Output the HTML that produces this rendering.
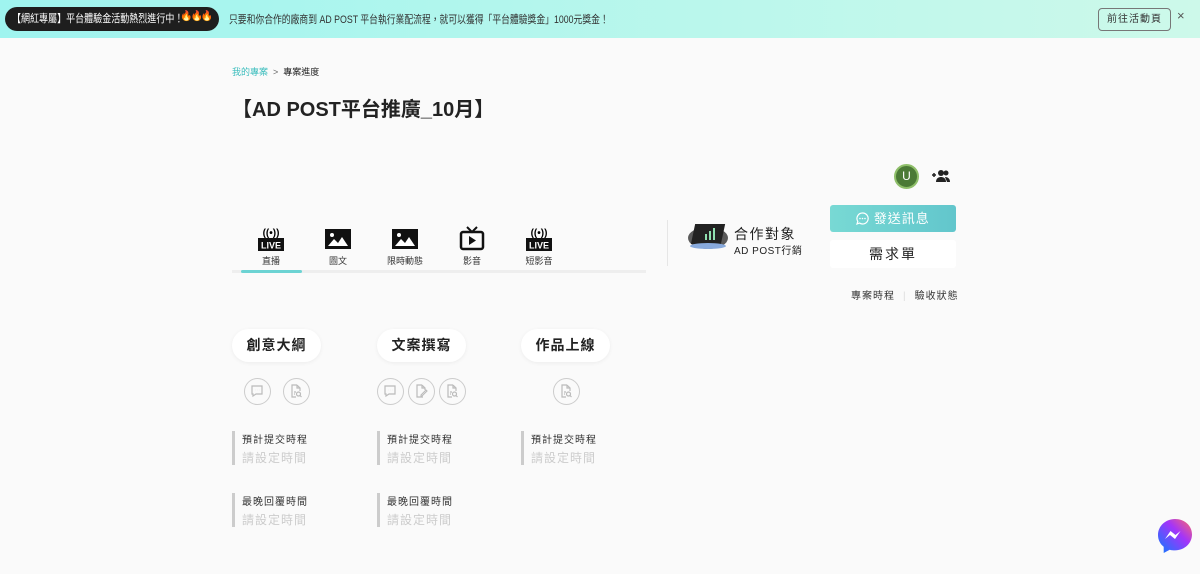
<!DOCTYPE html>
<html><head><meta charset="utf-8"><style>
*{margin:0;padding:0;box-sizing:border-box}
body{width:1200px;height:574px;background:#fafafa;font-family:"Liberation Sans","Noto Sans CJK TC",sans-serif;position:relative;overflow:hidden;color:#222}
.ab{position:absolute}
.banner{left:0;top:0;width:1200px;height:38px;background:linear-gradient(90deg,#9ff4ef,#cdf9ea)}
.pill1{left:5px;top:7px;width:214px;height:24px;background:#1e1e1e;border-radius:12px;color:#fff;font-size:11px;line-height:24px;padding-left:7px;white-space:nowrap}
.pill1 span.t{display:inline-block;transform:scaleX(.82);transform-origin:left}
.btxt{left:229px;top:11px;font-size:11px;color:#333;white-space:nowrap;transform:scaleX(.8);transform-origin:left}
.gob{left:1098px;top:8px;width:73px;height:23px;border:1px solid #777;border-radius:4px;font-size:10px;text-align:center;line-height:21px;color:#333;letter-spacing:1px}
.tab{position:absolute;top:225px;width:60px;text-align:center;font-size:9px;color:#333}
.tab svg{display:block;margin:0 auto 1px}
.pl{position:absolute;top:329px;width:89px;height:33px;background:#fff;border-radius:17px;box-shadow:0 1px 4px rgba(0,0,0,.06);font-size:14px;font-weight:bold;text-align:center;line-height:33px;letter-spacing:1px}
.ci{position:absolute;top:378px;width:27px;height:27px;border:1.5px solid #ccc;border-radius:50%}
.ci svg{position:absolute;left:5px;top:5px}
.tl{position:absolute;border-left:3px solid #ccc;height:34px;padding-left:7px}
.tl b{display:block;font-weight:normal;font-size:10px;color:#333;letter-spacing:1px;margin-top:0}
.tl span{display:block;font-size:12px;color:#ccc;letter-spacing:1px;margin-top:3px}
</style></head><body>
<div class="ab banner"></div>
<div class="ab pill1"><span class="t">【網紅專屬】平台體驗金活動熱烈進行中！</span></div>
<div class="ab" style="left:180px;top:11px;font-size:10px;color:#f60;letter-spacing:-2px">🔥🔥🔥</div>
<div class="ab btxt">只要和你合作的廠商到 AD POST 平台執行業配流程，就可以獲得「平台體驗獎金」1000元獎金！</div>
<div class="ab gob">前往活動頁</div>
<div class="ab" style="left:1177px;top:8px;font-size:13px;color:#555">×</div>

<div class="ab" style="left:232px;top:65px;font-size:9px"><span style="color:#3bbdbd">我的專案</span> <span style="color:#666">&nbsp;&gt;&nbsp;</span> 專案進度</div>
<div class="ab" style="left:232px;top:93px;font-size:20px;font-weight:bold">【AD POST平台推廣_10月】</div>

<div class="tab" style="left:241px"><svg width="28" height="28" viewBox="0 0 28 28"><text x="14" y="11" font-size="10" text-anchor="middle" font-weight="bold" font-family="Liberation Sans">((•))</text><rect x="1" y="13" width="26" height="13" fill="#111"/><text x="14" y="23.5" font-size="9" fill="#fff" text-anchor="middle" font-weight="bold" font-family="Liberation Sans">LIVE</text></svg>直播</div>
<div class="tab" style="left:308px"><svg width="28" height="28" viewBox="0 0 28 28"><rect x="1" y="4" width="26" height="20" fill="#111"/><circle cx="8" cy="10" r="2" fill="#fff"/><path d="M4 21l6-7 4 4 4-6 6 9z" fill="#fff"/></svg>圖文</div>
<div class="tab" style="left:375px"><svg width="28" height="28" viewBox="0 0 28 28"><rect x="1" y="4" width="26" height="20" fill="#111"/><circle cx="8" cy="10" r="2" fill="#fff"/><path d="M4 21l6-7 4 4 4-6 6 9z" fill="#fff"/></svg>限時動態</div>
<div class="tab" style="left:442px"><svg width="28" height="28" viewBox="0 0 28 28"><path d="M9 2l5 5 5-5" stroke="#111" stroke-width="2" fill="none"/><rect x="3" y="7" width="22" height="17" rx="2" stroke="#111" stroke-width="2.5" fill="none"/><path d="M11 11l7 4.5-7 4.5z" fill="#111"/></svg>影音</div>
<div class="tab" style="left:509px"><svg width="28" height="28" viewBox="0 0 28 28"><text x="14" y="11" font-size="10" text-anchor="middle" font-weight="bold" font-family="Liberation Sans">((•))</text><rect x="1" y="13" width="26" height="13" fill="#111"/><text x="14" y="23.5" font-size="9" fill="#fff" text-anchor="middle" font-weight="bold" font-family="Liberation Sans">LIVE</text></svg>短影音</div>
<div class="ab" style="left:232px;top:270px;width:414px;height:3px;background:#eee"></div>
<div class="ab" style="left:241px;top:270px;width:61px;height:3px;background:#6cd3d3;border-radius:2px"></div>

<div class="ab" style="left:667px;top:220px;width:1px;height:46px;background:#e6e6e6"></div>
<svg class="ab" style="left:688px;top:220px" width="42" height="32" viewBox="0 0 42 32"><ellipse cx="20" cy="18" rx="20" ry="11" fill="#5a5a5a"/><rect x="8" y="4" width="30" height="20" fill="#222" transform="skewX(-12)"/><path d="M18 20v-6M22 20v-9M26 20v-12" stroke="#8fe0b0" stroke-width="2"/><ellipse cx="20" cy="26" rx="18" ry="3" fill="#8ad"/></svg>
<div class="ab" style="left:734px;top:224px;font-size:14px;letter-spacing:1.5px">合作對象</div>
<div class="ab" style="left:734px;top:242px;font-size:10px;letter-spacing:.5px">AD POST行銷</div>

<div class="ab" style="left:894px;top:164px;width:25px;height:25px;border-radius:50%;background:#4b7a36;border:2px solid #8fbf6a;color:#fff;font-size:12px;text-align:center;line-height:21px">U</div>
<svg class="ab" style="left:932px;top:169px" width="18" height="13" viewBox="0 0 18 13"><path d="M0 6h4M2 4v4" stroke="#222" stroke-width="1.5"/><circle cx="9" cy="4" r="3" fill="#222"/><circle cx="14" cy="4" r="2.5" fill="#222"/><path d="M4 13c0-4 3-5 5-5s5 1 5 5zM13 8c2 0 5 1 5 5h-3z" fill="#222"/></svg>
<div class="ab" style="left:830px;top:205px;width:126px;height:27px;border-radius:3px;background:linear-gradient(90deg,#78d9d4,#62c6cc);color:#fff;font-size:13px;text-align:center;line-height:27px;letter-spacing:1px"><svg width="13" height="13" viewBox="0 0 13 13" style="vertical-align:-2px"><path d="M6.5 1a5.5 5.5 0 1 1-3 10L1 12l.8-2.6A5.5 5.5 0 0 1 6.5 1z" fill="none" stroke="#fff" stroke-width="1.2"/><circle cx="4" cy="6.5" r=".8" fill="#fff"/><circle cx="6.5" cy="6.5" r=".8" fill="#fff"/><circle cx="9" cy="6.5" r=".8" fill="#fff"/></svg> 發送訊息</div>
<div class="ab" style="left:830px;top:240px;width:126px;height:28px;border-radius:3px;background:#fff;font-size:14px;text-align:center;line-height:28px;letter-spacing:2px">需求單</div>
<div class="ab" style="left:851px;top:287px;font-size:10px;letter-spacing:1px;color:#333">專案時程<span style="color:#ddd;margin:0 8px">|</span>驗收狀態</div>

<div class="pl" style="left:232px">創意大綱</div>
<div class="pl" style="left:377px">文案撰寫</div>
<div class="pl" style="left:521px">作品上線</div>

<div class="ci" style="left:244px"><svg width="14" height="14" viewBox="0 0 14 14"><path d="M2 2h10v8H6l-3 2v-2H2z" fill="none" stroke="#bbb" stroke-width="1.2"/><path d="M5 6h.1M7 6h.1M9 6h.1" stroke="#bbb" stroke-width="1.2"/></svg></div>
<div class="ci" style="left:283px"><svg width="14" height="14" viewBox="0 0 14 14"><path d="M8 1H3v12h4M8 1l3 3v3M8 1v3h3" fill="none" stroke="#bbb" stroke-width="1.2"/><circle cx="9.5" cy="10" r="2" fill="none" stroke="#bbb" stroke-width="1.2"/><path d="M11 11.5l1.5 1.5M5 8h2M5 10h1" stroke="#bbb" stroke-width="1.2"/></svg></div>
<div class="ci" style="left:377px"><svg width="14" height="14" viewBox="0 0 14 14"><path d="M2 2h10v8H6l-3 2v-2H2z" fill="none" stroke="#bbb" stroke-width="1.2"/><path d="M5 6h.1M7 6h.1M9 6h.1" stroke="#bbb" stroke-width="1.2"/></svg></div>
<div class="ci" style="left:408px"><svg width="14" height="14" viewBox="0 0 14 14"><path d="M8 1H3v12h6M8 1l3 3v2M8 1v3h3" fill="none" stroke="#bbb" stroke-width="1.2"/><path d="M7 11l5-5 1 1-5 5H7z" fill="none" stroke="#bbb" stroke-width="1.1"/></svg></div>
<div class="ci" style="left:439px"><svg width="14" height="14" viewBox="0 0 14 14"><path d="M8 1H3v12h4M8 1l3 3v3M8 1v3h3" fill="none" stroke="#bbb" stroke-width="1.2"/><circle cx="9.5" cy="10" r="2" fill="none" stroke="#bbb" stroke-width="1.2"/><path d="M11 11.5l1.5 1.5M5 8h2M5 10h1" stroke="#bbb" stroke-width="1.2"/></svg></div>
<div class="ci" style="left:553px"><svg width="14" height="14" viewBox="0 0 14 14"><path d="M8 1H3v12h4M8 1l3 3v3M8 1v3h3" fill="none" stroke="#bbb" stroke-width="1.2"/><circle cx="9.5" cy="10" r="2" fill="none" stroke="#bbb" stroke-width="1.2"/><path d="M11 11.5l1.5 1.5M5 8h2M5 10h1" stroke="#bbb" stroke-width="1.2"/></svg></div>

<div class="tl" style="left:232px;top:431px"><b>預計提交時程</b><span>請設定時間</span></div>
<div class="tl" style="left:377px;top:431px"><b>預計提交時程</b><span>請設定時間</span></div>
<div class="tl" style="left:521px;top:431px"><b>預計提交時程</b><span>請設定時間</span></div>
<div class="tl" style="left:232px;top:493px"><b>最晚回覆時間</b><span>請設定時間</span></div>
<div class="tl" style="left:377px;top:493px"><b>最晚回覆時間</b><span>請設定時間</span></div>

<svg class="ab" style="left:1157px;top:518px" width="36" height="36" viewBox="0 0 36 36"><defs><linearGradient id="g" x1="0" y1="1" x2="1" y2="0"><stop offset="0" stop-color="#0a7cff"/><stop offset=".6" stop-color="#a334fa"/><stop offset="1" stop-color="#ff6968"/></linearGradient></defs><path d="M18 1C8.6 1 1 8 1 17c0 4.8 2.2 9 5.7 11.8V35l6-3.3c1.7.5 3.4.7 5.3.7 9.4 0 17-7 17-16S27.4 1 18 1z" fill="url(#g)"/><path d="M8 21l5.5-8 5 4 5-4L18 21l-5-4z" fill="#fff"/></svg>
</body></html>
